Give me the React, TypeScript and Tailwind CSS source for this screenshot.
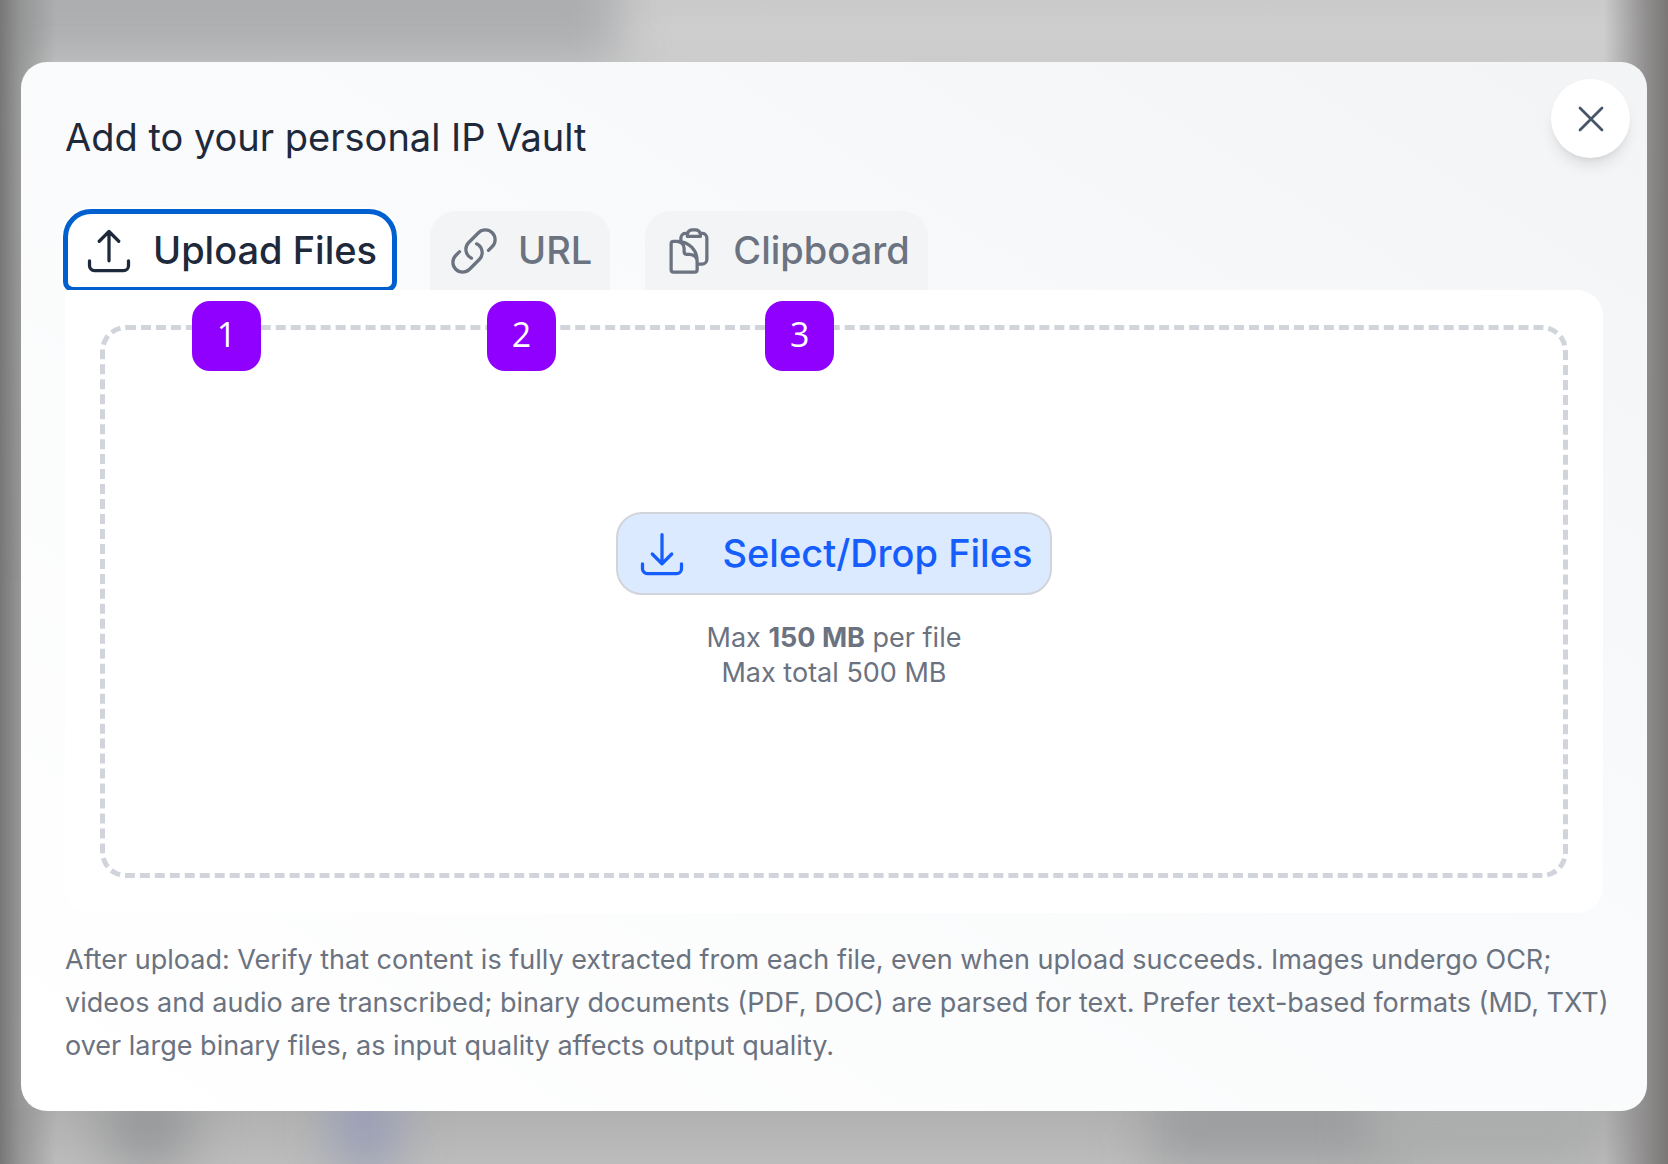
import { useState } from "react";
import {
  HiOutlineArrowDownTray,
  HiOutlineArrowUpTray,
  HiOutlineClipboardDocument,
  HiOutlineLink,
  HiOutlineXMark,
} from "react-icons/hi2";

const tabs = [
  { id: "files", label: "Upload Files", Icon: HiOutlineArrowUpTray, badge: "left-[127px]" },
  { id: "url", label: "URL", Icon: HiOutlineLink, badge: "left-[57px]" },
  { id: "clipboard", label: "Clipboard", Icon: HiOutlineClipboardDocument, badge: "left-[120px]" },
];

function Backdrop() {
  return (
    <div aria-hidden="true" className="absolute inset-0 -z-10 overflow-hidden bg-[#b9b9b9]">
      <div className="absolute inset-x-0 top-0 h-1/2 bg-linear-to-b from-[#cacaca] via-[#cecece] via-5% to-[#b0b0b0]" />
      <div className="absolute inset-x-0 bottom-0 h-14 bg-linear-to-b from-[#b0b0b0] to-[#bcbcbc]" />
      <div className="absolute -top-16 -left-8 h-32 w-[39%] bg-[#adaeb0] blur-xl" />
      <div className="absolute -bottom-1 left-[6%] h-24 w-24 rounded-full bg-[#98999b] blur-xl" />
      <div className="absolute -bottom-1 left-[20%] h-24 w-16 bg-[#9a9eb6] blur-xl" />
      <div className="absolute bottom-0 left-[69%] h-24 w-[15%] bg-[#9d9ea0] blur-xl" />
      <div className="absolute right-[4%] bottom-0 h-20 w-[14%] bg-[#abacac] blur-xl" />
      <div className="absolute inset-y-0 left-0 w-14 bg-linear-to-r from-[#767776] via-[#8c8d8c]/80 via-35% to-transparent" />
      <div className="absolute inset-y-0 right-0 w-16 bg-linear-to-l from-[#7a7676] via-[#8a8888]/90 via-35% to-transparent" />
    </div>
  );
}

export default function App() {
  const [active, setActive] = useState("files");

  return (
    <main className="relative isolate min-h-screen px-[21px] pt-[62px] pb-[52px] font-[Inter,sans-serif]">
      <Backdrop />
      <section
        role="dialog"
        aria-labelledby="vault-title"
        className="relative rounded-[26px] bg-linear-to-tr from-white via-[#f9fafb] via-60% to-[#f3f4f6] px-11 pt-[47px] pb-11"
      >
        <button
          type="button"
          aria-label="Close"
          className="absolute top-[17px] right-[17px] flex size-[79px] items-center justify-center rounded-full bg-white text-[#475569] shadow-lg"
        >
          <HiOutlineXMark className="size-11" />
        </button>

        <h1 id="vault-title" className="text-[38px] leading-[56px] text-[#1e293b]">
          Add to your personal IP Vault
        </h1>

        <div role="tablist" aria-label="Source" className="mt-[46px] flex gap-[35px]">
          {tabs.map(({ id, label, Icon, badge }, i) => (
            <div key={id} className="relative">
              <button
                type="button"
                role="tab"
                aria-selected={active === id}
                onClick={() => setActive(id)}
                className={
                  active === id
                    ? "flex h-[79px] items-center gap-[18px] rounded-t-[26px] rounded-b-lg bg-white px-[18px] text-[38px] font-medium text-[#1e293b] shadow-[0_0_0_4px_white] outline-5 -outline-offset-3 outline-[#0060d0]"
                    : "flex h-[79px] items-center gap-[18px] rounded-t-[26px] bg-[#f3f4f6] px-[18px] text-[38px] font-medium text-[#6b7280]"
                }
              >
                <Icon className="size-[52px]" />
                {label}
              </button>
              <span
                className={`absolute top-full z-10 mt-[11px] flex h-[70px] w-[69px] items-center justify-center rounded-[18px] bg-[#9000ff] pb-1 font-['Open_Sans',sans-serif] text-[34px] text-white ${badge}`}
              >
                {i + 1}
              </span>
            </div>
          ))}
        </div>

        <div role="tabpanel" className="relative rounded-tr-[26px] rounded-b-[26px] bg-white p-[35px]">
          <div className="flex h-[553px] flex-col items-center justify-center rounded-[26px] border-5 border-dashed border-[#d1d5db] pb-px">
            <button
              type="button"
              className="flex h-[83px] items-center gap-[35px] rounded-[26px] border-2 border-[#d1d5db] bg-[#dbeafe] px-[18px] text-[38px] font-medium text-[#155dfc]"
            >
              <HiOutlineArrowDownTray className="size-[52px]" />
              Select/Drop Files
            </button>
            <p className="mt-[25px] text-center text-[27px] leading-[35px] text-[#6b7280]">
              Max <strong>150 MB</strong> per file
              <br />
              Max total 500 MB
            </p>
          </div>
        </div>

        <p className="-mr-3 mt-[25px] text-[27px] leading-[43px] text-[#6b7280]">
          After upload: Verify that content is fully extracted from each file, even when upload succeeds. Images undergo OCR;
          <br />
          videos and audio are transcribed; binary documents (PDF, DOC) are parsed for text. Prefer text-based formats (MD, TXT)
          <br />
          over large binary files, as input quality affects output quality.
        </p>
      </section>
    </main>
  );
}
